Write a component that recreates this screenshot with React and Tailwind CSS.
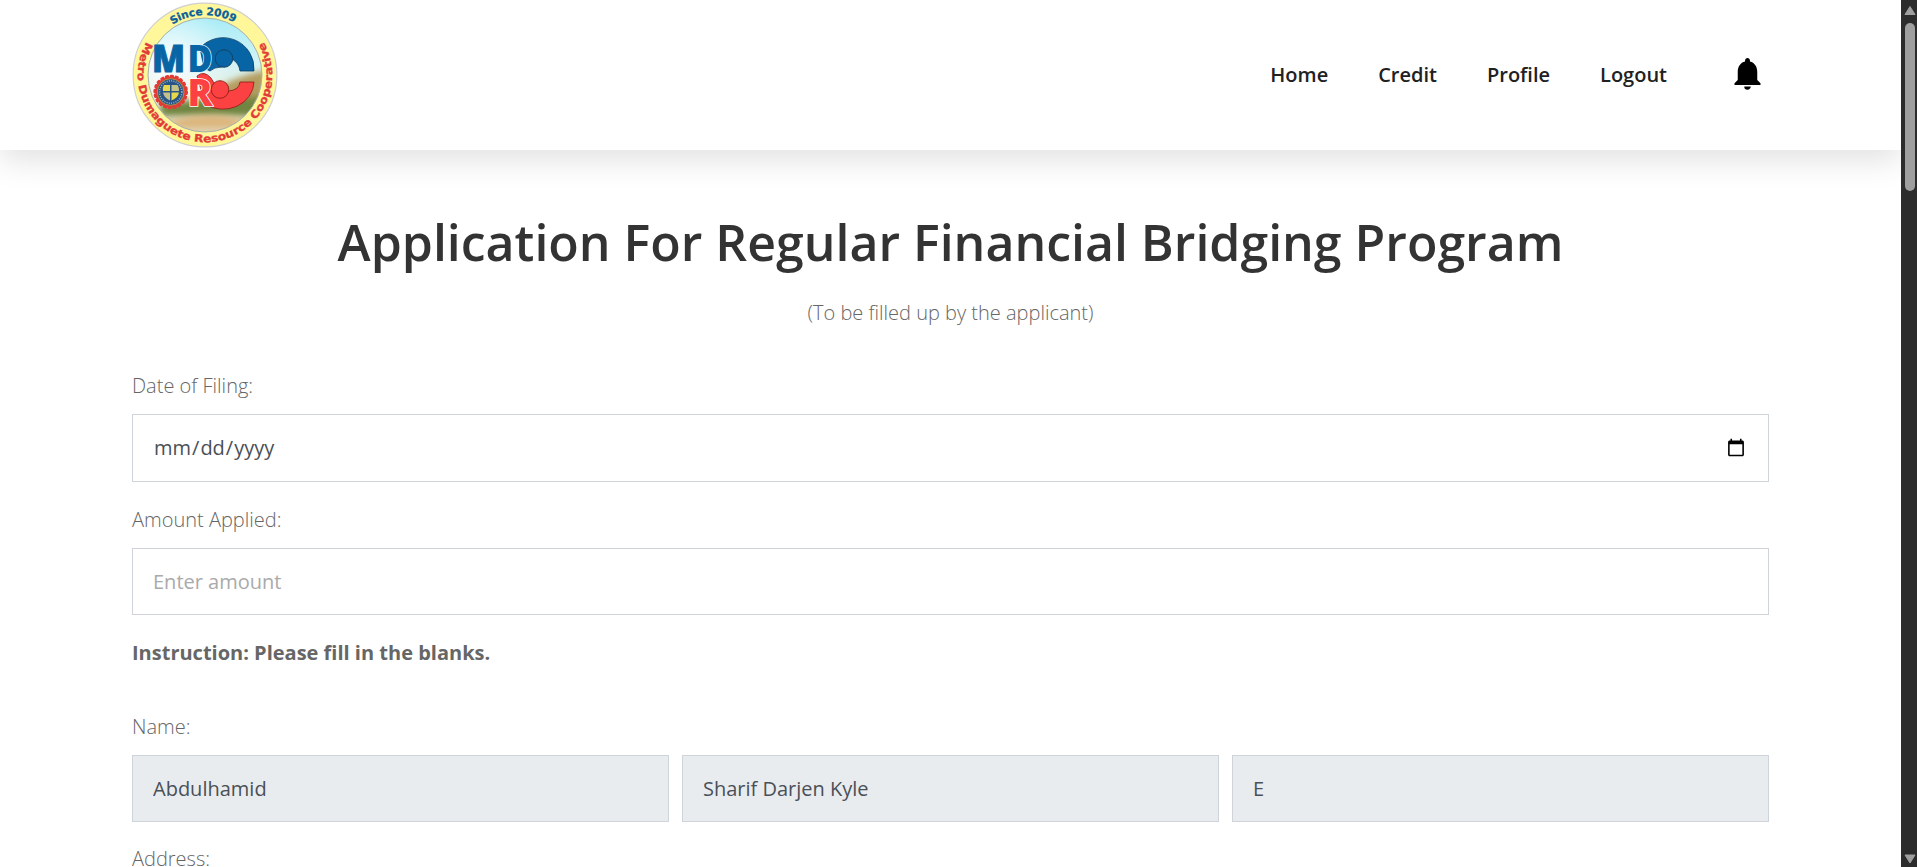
import React from "react";
import { MdNotifications } from "react-icons/md";

function Logo() {
  return (
    <svg viewBox="0 0 146 146" className="h-[146px] w-[146px]" fontFamily="'DejaVu Sans', sans-serif" fontWeight="bold">
      <defs>
        <linearGradient id="sky" x1="0" y1="0" x2="0" y2="1">
          <stop offset="0" stopColor="#a9ecf7" />
          <stop offset="0.4" stopColor="#d3f3f6" />
          <stop offset="0.65" stopColor="#e6eedd" />
          <stop offset="1" stopColor="#e0d3b4" />
        </linearGradient>
        <radialGradient id="glow" cx="0.18" cy="0.4" r="0.55">
          <stop offset="0" stopColor="#fff" stopOpacity="0.9" />
          <stop offset="1" stopColor="#fff" stopOpacity="0" />
        </radialGradient>
        <filter id="soft" x="-20%" y="-40%" width="140%" height="180%"><feGaussianBlur stdDeviation="3" /></filter>
        <clipPath id="disc"><circle cx="73" cy="73" r="57" /></clipPath>
        <path id="arcTop" d="M13 73 A60 60 0 0 1 133 73" />
        <path id="arcBottom" d="M18.600 33.400 A67.300 67.300 0 1 0 127.400 33.400" />
      </defs>
      <circle cx="73" cy="73" r="71.900" fill="#fff799" stroke="#cfcfcf" strokeWidth="1.200" />
      <circle cx="73" cy="73" r="57" fill="url(#sky)" />
      <circle cx="73" cy="73" r="57" fill="url(#glow)" />
      <g clipPath="url(#disc)">
        <path d="M70 96 Q95 76 134 68 V104 H70Z" fill="#b39c5f" filter="url(#soft)" />
        <path d="M26 104 Q75 92 134 96 V114 H30Z" fill="#6f8540" filter="url(#soft)" />
        <path d="M34 120 Q75 107 112 118 L100 126 H46Z" fill="#dcb67d" filter="url(#soft)" />
      </g>
      <circle cx="73" cy="73" r="57" fill="none" stroke="#a9b0a4" strokeWidth="1" />
      <text fontSize="10.500" fill="#0a5f9d" stroke="#0a5f9d" strokeWidth="0.300"><textPath href="#arcTop" startOffset="49%" textAnchor="middle" textLength="65" lengthAdjust="spacingAndGlyphs">Since 2009</textPath></text>
      <text fontSize="10.500" fill="#e23b38" stroke="#e23b38" strokeWidth="0.300"><textPath href="#arcBottom" startOffset="50%" textAnchor="middle" textLength="280" lengthAdjust="spacingAndGlyphs">Metro Dumaguete Resource Cooperative</textPath></text>
      <g fontFamily="'Open Sans', sans-serif" fontWeight="800">
        <path d="M68 46 A31 31 0 0 1 122 69 H108 Q107 61 100 57 L90 65 Q82 65 78 69 L72 66Z" fill="#0865a5" stroke="#0c3f66" strokeWidth="0.800" />
        <path d="M65 74 Q72 68 79 76 L82 81 L97 89 Q107 88 108 80 H122 A31 28 0 0 1 73 102Z" fill="#fb4141" stroke="#8b1c1c" strokeWidth="0.800" />
        <circle cx="92" cy="56.500" r="8.800" fill="#0865a5" stroke="#153d5c" strokeWidth="0.900" />
        <circle cx="88" cy="87.500" r="8.800" fill="#fb4141" stroke="#8b1c1c" strokeWidth="0.900" />
        <text x="20" y="70" fontSize="37" textLength="33" lengthAdjust="spacingAndGlyphs" fill="#0865a5" stroke="#0865a5" strokeWidth="1">M</text>
        <text x="55.500" y="70" fontSize="37" textLength="25" lengthAdjust="spacingAndGlyphs" fill="#0865a5" stroke="#d9f3f8" strokeWidth="1.600" paintOrder="stroke">D</text>
        <text x="55.500" y="104" fontSize="37" textLength="25" lengthAdjust="spacingAndGlyphs" fill="#fb4141" stroke="#fff" strokeWidth="1.600" paintOrder="stroke">R</text>
      </g>
      <circle cx="38.700" cy="90" r="15.500" fill="#e23a35" />
      <circle cx="38.700" cy="90" r="15.800" fill="none" stroke="#e23a35" strokeWidth="3" strokeLinecap="round" strokeDasharray="1.500 3.460" />
      <circle cx="38.700" cy="90" r="13.300" fill="#285487" stroke="#bfa53b" strokeWidth="0.800" />
      <circle cx="38.700" cy="90" r="11.200" fill="none" stroke="#9fb4b3" strokeWidth="1.500" strokeDasharray="1 1.300" />
      <path d="M32 83H38V89H31Q30 86 32 83Z M39.500 90.500H47Q46 96 39.500 98.500Z" fill="#e7d84b" />
      <path d="M39.500 83H45.500Q47.500 86 47 89H39.500Z M31 90.500H38V98.500Q32 96 31 90.500Z" fill="#c3c08a" />
    </svg>
  );
}

const links = ["Home", "Credit", "Profile", "Logout"];

function Label({ children }) {
  return <label className="block h-[30px] text-[20px] leading-[30px] font-light text-[#666]">{children}</label>;
}

function NameField({ value }) {
  return (
    <input
      readOnly
      value={value}
      className="h-[67px] min-w-0 flex-1 border border-[#ced4da] bg-[#e9ecef] px-5 text-[20px] text-[#495057] outline-none"
    />
  );
}

function Scrollbar() {
  return (
    <div className="flex h-full w-4 shrink-0 flex-col items-center bg-[#2c2c2c]">
      <svg viewBox="0 0 16 23" className="h-[23px] w-4 shrink-0"><path d="M9 6.500 L14 14.500 H4Z" fill="#9f9f9f" stroke="#9f9f9f" strokeLinejoin="round" /></svg>
      <div className="ml-0.5 h-[168px] w-2.5 rounded-full bg-[#9f9f9f]" />
      <svg viewBox="0 0 16 16" className="mt-auto h-4 w-4 shrink-0"><path d="M4 4 H14 L9 12Z" fill="#9f9f9f" stroke="#9f9f9f" strokeLinejoin="round" /></svg>
    </div>
  );
}

export default function App() {
  return (
    <div className="flex h-[867px] w-[1917px] overflow-hidden bg-white font-['Open_Sans',sans-serif]">
      <div className="h-full w-[1901px] overflow-hidden">
        <header className="flex h-[150px] items-center bg-white pr-[134px] pl-[132px] shadow-[0_10px_30px_rgba(0,0,0,0.12)]">
          <Logo />
          <nav className="ml-auto flex items-center gap-[50px] text-[20px] leading-[30px] font-semibold text-[#212121]">
            {links.map((label) => (
              <a key={label}>{label}</a>
            ))}
          </nav>
          <MdNotifications className="mb-1 ml-[61px] h-[39px] w-[39px] text-black" />
        </header>
        <main className="px-[132px] pt-[62px]">
          <h1 className="text-center text-[50px] leading-[60px] font-semibold text-[#333]">
            Application For Regular Financial Bridging Program
          </h1>
          <p className="mt-[26px] h-[30px] text-center text-[20px] leading-[30px] font-light text-[#666]">
            (To be filled up by the applicant)
          </p>
          <div className="mt-[43px]">
            <Label>Date of Filing:</Label>
            <input
              type="date"
              className="mt-[13px] block h-[68px] w-full border border-[#ced4da] px-5 text-[20px] text-[#495057] outline-none"
            />
          </div>
          <div className="mt-[23px]">
            <Label>Amount Applied:</Label>
            <input
              placeholder="Enter amount"
              className="mt-[13px] block h-[67px] w-full border border-[#ced4da] px-5 text-[20px] outline-none placeholder:text-[#aaa]"
            />
          </div>
          <p className="mt-[23px] h-[30px] text-[20px] leading-[30px] font-bold text-[#666]">Instruction: Please fill in the blanks.</p>
          <div className="mt-[44px]">
            <Label>Name:</Label>
            <div className="mt-[13px] flex gap-[13px]">
              <NameField value="Abdulhamid" />
              <NameField value="Sharif Darjen Kyle" />
              <NameField value="E" />
            </div>
          </div>
          <div className="mt-[22px]">
            <Label>Address:</Label>
          </div>
        </main>
      </div>
      <Scrollbar />
    </div>
  );
}
